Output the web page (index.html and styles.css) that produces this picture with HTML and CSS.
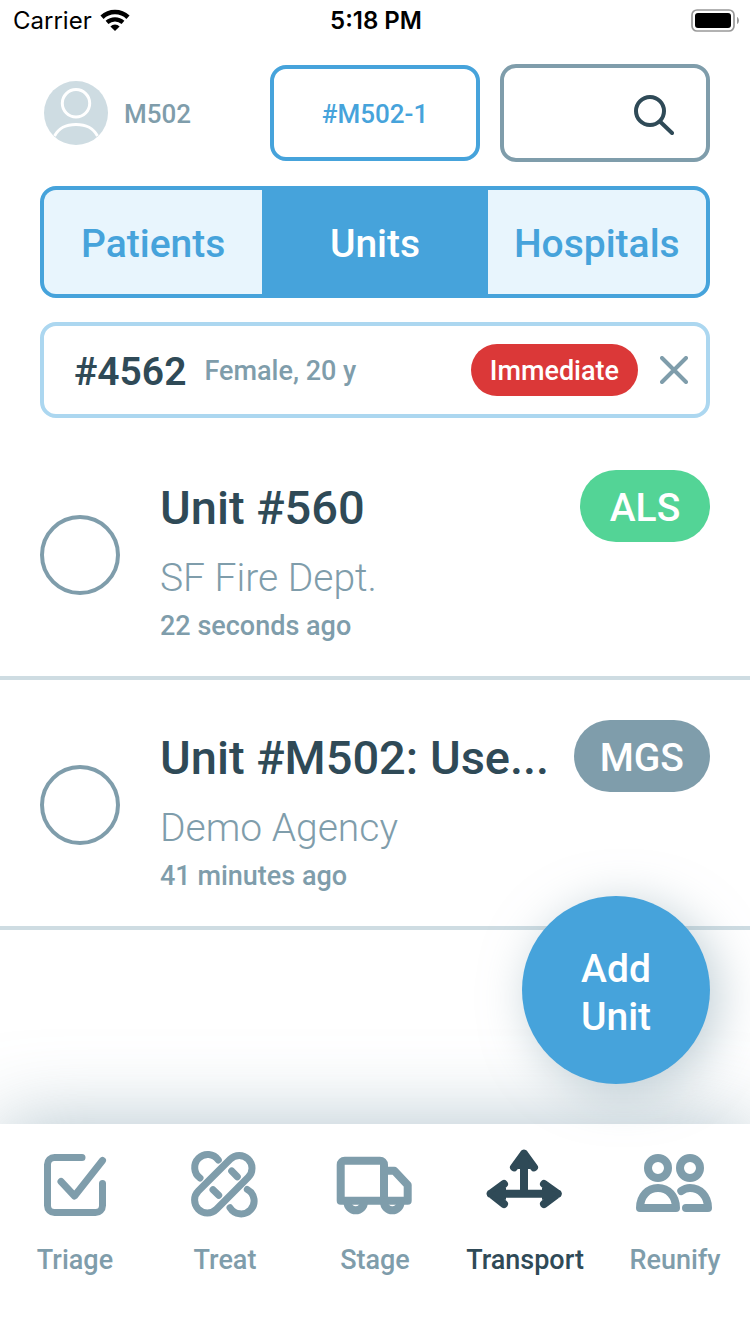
FILE: index.html
```html
<!DOCTYPE html>
<html lang="en">
<head>
<meta charset="utf-8">
<meta name="viewport" content="width=device-width, initial-scale=1">
<title>Transport – Units</title>
<link rel="stylesheet" href="styles.css">
</head>
<body>
<div class="screen">
  <div class="status">
    <div class="status-left">
      <span>Carrier</span>
      <svg class="wifi" viewBox="0 0 30 22" aria-hidden="true">
        <path d="M2 8.200a19 19 0 0 1 26 0" fill="none" stroke="#000" stroke-width="4.600"/>
        <path d="M7 13.400a12 12 0 0 1 16 0" fill="none" stroke="#000" stroke-width="4.200"/>
        <path d="M15 22l-4.600-4.600a6.600 6.600 0 0 1 9.200 0z"/>
      </svg>
    </div>
    <time class="clock">5:18 PM</time>
    <svg class="battery" viewBox="0 0 48 23" aria-hidden="true">
      <rect x="1" y="1" width="42" height="21" rx="5" fill="none" stroke="#999" stroke-width="1.700"/>
      <rect x="4" y="4" width="36" height="15" rx="3"/>
      <path d="M46 8c2.600 1 2.600 6 0 7z" fill="#999"/>
    </svg>
  </div>

  <header class="top">
    <div class="user">
      <svg class="avatar" viewBox="0 0 64 64" aria-hidden="true">
        <circle cx="32" cy="32" r="32" fill="#cedce2"/>
        <circle cx="32" cy="22.300" r="13.700" fill="none" stroke="#fff" stroke-width="3"/>
        <path d="M10.500 55C15 47 21 43.500 32 43.500S49 47 53.500 55" fill="none" stroke="#fff" stroke-width="3"/>
      </svg>
      <span class="user-name">M502</span>
    </div>
    <button class="scene" type="button">#M502-1</button>
    <label class="search">
      <input type="text" aria-label="Search">
      <svg viewBox="0 0 40 40" aria-hidden="true">
        <circle cx="16" cy="16" r="14"/>
        <path d="M26.500 27L38 38"/>
      </svg>
    </label>
  </header>

  <div class="tabs" role="tablist">
    <button class="tab" type="button" role="tab">Patients</button>
    <button class="tab tab-on" type="button" role="tab" aria-selected="true">Units</button>
    <button class="tab" type="button" role="tab">Hospitals</button>
  </div>

  <section class="patient">
    <strong class="patient-id">#4562</strong>
    <span class="patient-info">Female, 20 y</span>
    <span class="priority">Immediate</span>
    <button class="close" type="button" aria-label="Remove patient">
      <svg viewBox="0 0 28 28" aria-hidden="true"><path d="M2 2l24 24M26 2L2 26"/></svg>
    </button>
  </section>

  <main class="content">
    <ul class="units">
      <li>
        <label class="unit">
          <input class="radio" type="radio" name="unit">
          <span class="unit-body">
            <span class="unit-head">
              <span class="unit-name">Unit #560</span>
              <span class="badge badge-als">ALS</span>
            </span>
            <span class="agency">SF Fire Dept.</span>
            <span class="ago">22 seconds ago</span>
          </span>
        </label>
      </li>
      <li>
        <label class="unit">
          <input class="radio" type="radio" name="unit">
          <span class="unit-body">
            <span class="unit-head">
              <span class="unit-name">Unit #M502: Use...</span>
              <span class="badge">MGS</span>
            </span>
            <span class="agency">Demo Agency</span>
            <span class="ago">41 minutes ago</span>
          </span>
        </label>
      </li>
    </ul>
    <button class="add" type="button">Add<br>Unit</button>
  </main>

  <nav class="nav">
    <a class="nav-item" href="#triage">
      <svg viewBox="0 0 80 80" stroke-width="7" aria-hidden="true">
        <path d="M47 13.500H19.500a7 7 0 0 0-7 7v41a7 7 0 0 0 7 7h41a7 7 0 0 0 7-7V39.500"/>
        <path d="M26 37.500l13.500 14.500L67.500 16.500"/>
      </svg>
      Triage
    </a>
    <a class="nav-item" href="#treat">
      <svg viewBox="0 0 80 80" stroke-width="7" aria-hidden="true">
        <rect x="3" y="27.400" width="70.600" height="25.600" rx="12.800" transform="rotate(-45 38.300 40.200)"/>
        <path d="M15 34A13 13 0 1 1 33.300 16"/>
        <path d="M62.300 45.500A13 13 0 1 1 45 63.700"/>
        <path d="M46.700 27l5.600 5.700M28 45.700l5.700 5.600"/>
      </svg>
      Treat
    </a>
    <a class="nav-item" href="#stage">
      <svg viewBox="0 0 80 80" stroke-width="8" aria-hidden="true">
        <path d="M49 56.700H5.700V20.700a4 4 0 0 1 4-4H45a4 4 0 0 1 4 4z"/>
        <path d="M49 26.700h10.300L72.700 41v15.700H49"/>
        <path d="M12.400 58a8.300 8.300 0 0 0 16.600 0M49 58a8.300 8.300 0 0 0 16.600 0"/>
      </svg>
      Stage
    </a>
    <a class="nav-item nav-on" href="#transport" aria-current="page">
      <svg viewBox="0 0 80 80" stroke-width="8" aria-hidden="true">
        <path d="M5.700 49.700h67M39 49.700V9.700M29 23.300L39 9.700l10 13.600M19 40L5.700 49.700 19 60M59 40l13.700 9.700L59 60"/>
        <path d="M39 10l6 9v6H33v-6zM6 49.700l9-6h6v12h-6zM72 49.700l-9-6h-6v12h6z" fill="currentColor" stroke="none"/>
      </svg>
      Transport
    </a>
    <a class="nav-item" href="#reunify">
      <svg viewBox="0 0 80 80" stroke-width="8" aria-hidden="true">
        <circle cx="23" cy="24" r="10"/>
        <circle cx="55" cy="24" r="10"/>
        <path d="M5 64C5 52 13 44 23 44s18 8 18 20z"/>
        <path d="M46.300 47C49 45 52 44 55 44c10 0 18 8 18 20H51"/>
      </svg>
      Reunify
    </a>
  </nav>
</div>
</body>
</html>
```

FILE: styles.css
```css
* {
  box-sizing: border-box;
}

body {
  margin: 0;
  background: #fff;
  color: #2f4a57;
  font-family: Roboto, "Liberation Sans", sans-serif;
  font-weight: 500;
}

button,
input {
  font: inherit;
  color: inherit;
}

button {
  padding: 0;
  border: 0;
  background: none;
  cursor: pointer;
}

.screen {
  display: flex;
  flex-direction: column;
  min-height: 100vh;
  overflow: hidden;
}

/* Status bar */
.status {
  display: grid;
  grid-template-columns: 1fr auto 1fr;
  align-items: center;
  height: 40px;
  padding: 0 11px 0 13px;
  font-family: Inter, sans-serif;
  font-size: 24px;
  color: #000;
}

.status-left {
  display: flex;
  align-items: center;
  gap: 8px;
  font-weight: 400;
}

.wifi {
  width: 30px;
  height: 22px;
}

.clock {
  font-weight: 600;
}

.battery {
  justify-self: end;
  width: 48px;
  height: 23px;
}

/* Header */
.top {
  display: grid;
  grid-template-columns: repeat(3, minmax(0, 1fr));
  align-items: center;
  gap: 20px;
  padding: 24px 40px;
  font-size: 26px;
}

.user {
  display: flex;
  align-items: center;
  gap: 16px;
  padding-left: 4px;
  color: #7f9dab;
}

.user-name {
  padding-top: 2px;
}

.avatar {
  width: 64px;
  height: 64px;
}

.scene {
  height: 96px;
  padding-top: 2px;
  border: 4px solid #46a3db;
  border-radius: 16px;
  color: #46a3db;
}

.search {
  display: flex;
  align-items: center;
  height: 98px;
  padding: 4px 32px 0 16px;
  border: 4px solid #7f9dab;
  border-radius: 16px;
}

.search input {
  flex: 1;
  min-width: 0;
  border: 0;
  outline: 0;
  background: none;
}

.search svg {
  width: 40px;
  height: 40px;
  fill: none;
  stroke: #2f4a57;
  stroke-width: 4;
  stroke-linecap: round;
}

/* Tabs */
.tabs {
  display: grid;
  grid-template-columns: 1fr 34% 1fr;
  margin: 0 40px;
  border: 4px solid #46a3db;
  border-radius: 16px;
  background: #46a3db;
  overflow: hidden;
}

.tab {
  height: 104px;
  padding-top: 4px;
  background: #e8f5fd;
  color: #46a3db;
  font-size: 39px;
}

.tab-on {
  background: #46a3db;
  color: #fff;
}

/* Selected patient */
.patient {
  display: flex;
  align-items: center;
  height: 96px;
  margin: 24px 40px 12px;
  padding: 0 18px 0 30px;
  border: 4px solid #acd7f0;
  border-radius: 16px;
}

.patient-id {
  margin-right: 18px;
  padding-top: 4px;
  font-size: 39px;
  font-weight: 600;
}

.patient-info {
  flex: 1;
  padding-top: 2px;
  color: #7f9dab;
  font-size: 27px;
}

.priority {
  padding: 2px 19px 0;
  border-radius: 26px;
  background: #db3838;
  color: #fff;
  font-size: 27px;
  line-height: 50px;
}

.close {
  display: flex;
  margin-left: 22px;
}

.close svg {
  width: 28px;
  height: 28px;
  fill: none;
  stroke: #7f9dab;
  stroke-width: 4;
  stroke-linecap: round;
}

/* Units */
.content {
  position: relative;
  flex: 1;
}

.units {
  margin: 0;
  padding: 0;
  list-style: none;
}

.unit {
  display: flex;
  align-items: center;
  gap: 40px;
  padding: 4px 40px 0;
  border-bottom: 4px solid #cedce2;
}

.radio {
  flex: none;
  appearance: none;
  width: 80px;
  height: 80px;
  margin: 0;
  border: 4px solid #7f9dab;
  border-radius: 50%;
}

.unit-body {
  display: flex;
  flex: 1;
  flex-direction: column;
  min-width: 0;
  padding: 36px 0 28px;
}

.unit-head {
  display: flex;
  align-items: center;
  justify-content: space-between;
  gap: 20px;
  margin-bottom: 10px;
}

.unit-name {
  padding-top: 4px;
  overflow: hidden;
  font-size: 47px;
  line-height: 68px;
  white-space: nowrap;
}

.badge {
  flex: none;
  min-width: 130px;
  padding: 4px 26px 0;
  border-radius: 36px;
  background: #7f9dab;
  color: #fff;
  font-size: 39px;
  line-height: 68px;
  text-align: center;
}

.badge-als {
  background: #53d496;
}

.agency {
  color: #7f9dab;
  font-size: 39px;
  font-weight: 300;
  line-height: 52px;
}

.ago {
  color: #7f9dab;
  font-size: 27px;
  line-height: 44px;
}

.add {
  position: absolute;
  right: 40px;
  bottom: 40px;
  width: 188px;
  height: 188px;
  padding-top: 6px;
  border-radius: 50%;
  background: #46a3db;
  box-shadow: 8px 8px 48px rgba(127, 157, 171, 0.5);
  color: #fff;
  font-size: 39px;
  line-height: 48px;
}

/* Bottom navigation */
.nav {
  display: grid;
  grid-template-columns: repeat(5, minmax(0, 1fr));
  height: 210px;
  padding-top: 20px;
  background: #fff;
  box-shadow: 0 0 80px rgba(127, 157, 171, 0.6);
}

.nav-item {
  display: flex;
  flex-direction: column;
  align-items: center;
  gap: 16px;
  color: #7f9dab;
  font-size: 27px;
  line-height: 40px;
  text-decoration: none;
}

.nav-item svg {
  width: 80px;
  height: 80px;
  fill: none;
  stroke: currentColor;
  stroke-linecap: round;
  stroke-linejoin: round;
}

.nav-on {
  color: #2f4a57;
}
```
